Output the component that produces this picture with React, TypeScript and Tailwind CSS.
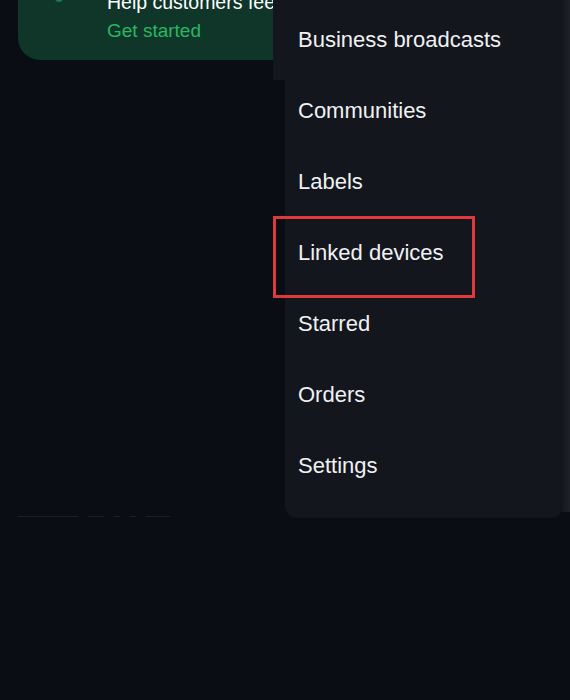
import React from 'react';

const menuItems = [
  'Business broadcasts',
  'Communities',
  'Labels',
  'Linked devices',
  'Starred',
  'Orders',
  'Settings',
];

const App: React.FC = () => {
  return (
    <div
      className="relative w-[570px] h-[700px] overflow-hidden bg-[#0a0d14]"
      style={{ fontFamily: '"Liberation Sans", Arial, sans-serif' }}
    >
      {/* page behind the menu */}
      <div className="ml-[18px] w-[280px] h-[60px] rounded-b-[22px] bg-[#0f3629] relative flex flex-col">
        <div className="absolute left-[37px] top-[-6px] w-[8px] h-[8px] rounded-full bg-[#1a7a4d]" />
        <div className="pl-[89px] -mt-[9px] flex flex-col whitespace-nowrap">
          <span className="text-[19.5px] leading-[22px] text-white">Help customers feel at home</span>
          <span className="text-[19px] leading-[22px] mt-[7px] text-[#27b863]">Get started</span>
        </div>
      </div>

      <div className="absolute right-0 top-[85px] w-[30px] h-[46px] border-y border-[#2a2e36] flex items-center justify-end">
        <span className="text-[18px] text-[#c9ccd1] -mr-[6px]">r</span>
      </div>

      <div className="absolute left-[18px] top-[516px] flex gap-[10px] opacity-15">
        <div className="w-[60px] h-[1px] bg-[#8a8f98]" />
        <div className="w-[16px] h-[1px] bg-[#8a8f98]" />
        <div className="w-[6px] h-[1px] bg-[#8a8f98]" />
        <div className="w-[6px] h-[1px] bg-[#8a8f98]" />
        <div className="w-[24px] h-[1px] bg-[#8a8f98]" />
      </div>

      {/* dropdown menu overlay */}
      <div className="absolute left-[273px] top-0 w-[14px] h-[80px] bg-[#13161d]" />
      <div className="absolute left-[562px] top-0 w-[8px] h-[512px] bg-gradient-to-r from-[#161920] to-[#1d2028]" />
      <div className="absolute left-[285px] top-0 w-[278px] h-[518px] rounded-b-[12px] bg-[#13161d] pt-[4px]">
        {menuItems.map((item) => (
          <div key={item} className="h-[71px] flex items-center pl-[13px]">
            <span className="text-[22px] text-[#f0f1f3] whitespace-nowrap">{item}</span>
          </div>
        ))}
      </div>

      <div className="absolute left-[273px] top-[216px] w-[202px] h-[82px] border-[3px] border-[#e0393b]" />
    </div>
  );
};

export default App;
